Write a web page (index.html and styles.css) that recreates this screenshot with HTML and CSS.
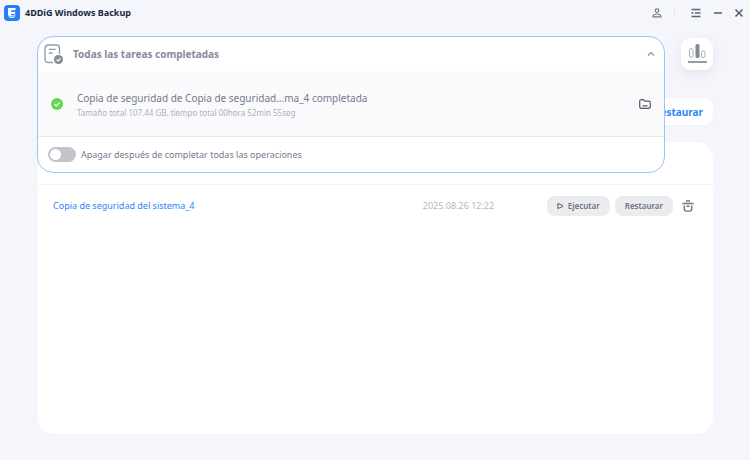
FILE: index.html
```html
<!DOCTYPE html>
<html lang="es">
<head>
  <meta charset="UTF-8">
  <meta name="viewport" content="width=device-width, initial-scale=1">
  <title>4DDiG Windows Backup</title>
  <link rel="stylesheet" href="styles.css">
</head>
<body>
  <header class="titlebar">
    <svg class="logo" width="16" height="16" viewBox="0 0 16 16">
      <rect width="16" height="16" rx="4" fill="#2a7df8"/>
      <path d="M4 3h6.500c1.600 0 1.600 2.200.5 2.200H7v1.600h3.500c1 0 1 2.200 0 2.200H7v1.200c1.700.3 3.300-.1 4.500-1.400.4 2.400-1.200 4.200-4 4.200C5.300 13 4 12 4 10z" fill="#fff"/>
      <path d="M3.500 10.500c2.500 1.800 6 1.600 8.500-1" fill="none" stroke="#2a7df8" stroke-width=".7"/>
    </svg>
    <h1 class="app-name">4DDiG Windows Backup</h1>
    <button class="win-btn user-btn" type="button" aria-label="Cuenta">
      <svg width="10" height="10" viewBox="0 0 10 10" fill="none" stroke="#747b8d" stroke-width="1.200">
        <circle cx="5" cy="2.600" r="1.800"/>
        <path d="M1 8.900c-.8-3.900 8.800-3.900 8 0z"/>
      </svg>
    </button>
    <span class="divider"></span>
    <button class="win-btn menu-btn" type="button" aria-label="Menú">
      <svg width="10" height="10" viewBox="0 0 10 10" fill="none" stroke="#5d667b" stroke-width="1.300">
        <path d="M.5 1.500h9M.5 5h2M4 5h5.500M.5 8.500h9"/>
      </svg>
    </button>
    <button class="win-btn" type="button" aria-label="Minimizar">
      <svg width="10" height="10" viewBox="0 0 10 10" stroke="#5d667b" stroke-width="1.600"><path d="M1 5h8"/></svg>
    </button>
    <button class="win-btn" type="button" aria-label="Cerrar">
      <svg width="10" height="10" viewBox="0 0 10 10" stroke="#4f586d" stroke-width="1.500"><path d="M1.500 1.500l7 7M8.500 1.500l-7 7"/></svg>
    </button>
  </header>

  <main class="content">
    <div class="toolbar">
      <button class="chart-btn" type="button" aria-label="Tareas">
        <svg width="20" height="20" viewBox="0 0 20 20" fill="none" stroke="#a5aab6" stroke-width="1">
          <rect x="2.500" y="4.500" width="3.500" height="9" rx="1.700"/>
          <rect x="14.500" y="7" width="3.500" height="6.500" rx="1.700"/>
          <rect x="8.500" y="0" width="4" height="14" rx="1.500" fill="#80879a" stroke="none"/>
          <path d="M1 18h19" stroke="#858b9c" stroke-width="1.700"/>
        </svg>
      </button>
    </div>
    <div class="tabs">
      <button class="tab" type="button">Restaurar</button>
    </div>
    <section class="card">
      <div class="card-head"></div>
      <div class="backup-row">
        <a class="backup-name" href="#">Copia de seguridad del sistema_4</a>
        <time class="backup-date">2025.08.26 12:22</time>
        <div class="row-actions">
          <button class="pill" type="button">
            <svg width="6" height="8" viewBox="0 0 6 8" fill="none" stroke="#6c7487" stroke-width="1.100" stroke-linejoin="round"><path d="M.8 1.500v5L5.200 4.700c.5-.4.5-1 0-1.400z"/></svg>
            Ejecutar
          </button>
          <button class="pill" type="button">Restaurar</button>
          <button class="trash-btn" type="button" aria-label="Eliminar">
            <svg width="12" height="12" viewBox="0 0 12 12" fill="none" stroke="#6c7487" stroke-width="1.400">
              <path d="M.5 3.500h11M4 1h4M2.200 5.500v2.700c0 2 .7 2.900 2.200 2.900h3.200c1.500 0 2.200-.9 2.200-2.900V5.500M4.500 6.200h3"/>
            </svg>
          </button>
        </div>
      </div>
    </section>
  </main>

  <section class="tasks">
    <div class="tasks-head">
      <svg width="20" height="20" viewBox="0 0 20 20" fill="none" stroke="#969cab" stroke-width="1.400">
        <path d="M9 18.500H4.500c-2.300 0-3.500-1-3.500-3.300V4.500C1 2 2 1 4.500 1h7.800C14.500 1 15.500 2 15.500 4.500V10M4.800 5.400h7M4.800 9h3.700"/>
        <circle cx="14.500" cy="15.500" r="4.500" fill="#858c9d" stroke="none"/>
        <path d="M12.600 15.500l1.500 1.400 2.400-2.600" stroke="#fff" stroke-width="1.200"/>
      </svg>
      <h2 class="tasks-title">Todas las tareas completadas</h2>
      <button class="icon-btn" type="button" aria-label="Contraer">
        <svg width="8" height="8" viewBox="0 0 8 8" fill="none" stroke="#8a90a0" stroke-width="1.200"><path d="M1 5.500l3-3 3 3"/></svg>
      </button>
    </div>
    <div class="task">
      <svg width="12" height="12" viewBox="0 0 12 12" fill="none">
        <circle cx="6" cy="6" r="6" fill="#5fdb4d"/>
        <path d="M3.400 6l2 1.900 3.300-3.500" stroke="#fff" stroke-width="1.100"/>
      </svg>
      <div class="task-info">
        <p class="task-name">Copia de seguridad de Copia de seguridad...ma_4 completada</p>
        <p class="task-detail">Tamaño total 107.44 GB, tiempo total 00hora 52min 55seg</p>
      </div>
      <button class="icon-btn" type="button" aria-label="Abrir carpeta">
        <svg width="12" height="10" viewBox="0 0 12 10" fill="none" stroke="#50596d" stroke-width="1.200">
          <path d="M.7 2.500C.7 1.200 1.200.7 2.400.7h1.800l1.500 1.500h3.700c1.300 0 1.900.6 1.900 1.800v3.300c0 1.400-.6 2-2 2H2.700c-1.400 0-2-.6-2-2zM3.500 6.800h5"/>
        </svg>
      </button>
    </div>
    <div class="shutdown">
      <input class="switch" id="shutdown" type="checkbox">
      <label for="shutdown">Apagar después de completar todas las operaciones</label>
    </div>
  </section>
</body>
</html>
```
FILE: styles.css
```css
* { box-sizing: border-box; }
body {
  display: flex;
  flex-direction: column;
  min-height: 100vh;
  margin: 0;
  background: #f5f6fc;
  color: #737b8e;
  font-family: "Noto Sans", "Open Sans", sans-serif;
  font-size: 9px;
}
h1, h2, p { margin: 0; }
button { padding: 0; border: none; background: none; color: inherit; font: inherit; cursor: pointer; }
svg { display: block; flex: none; }

/* title bar */
.titlebar { display: flex; align-items: center; height: 26px; padding: 0 1px 0 4px; }
.app-name { margin: 0 auto 0 5px; color: #1c2742; font-size: 9px; line-height: 14px; }
.win-btn { display: flex; justify-content: center; align-items: center; width: 21px; height: 20px; }
.user-btn { margin-right: 7px; }
.divider { width: 1px; height: 6px; background: #dfe1e8; }
.menu-btn { margin: 0 1px 0 10px; }

/* main area */
.content { display: flex; flex: 1; flex-direction: column; padding: 12px 37px 26px 38px; }
.toolbar, .tabs { display: flex; justify-content: flex-end; }
.chart-btn {
  display: flex;
  justify-content: center;
  align-items: center;
  width: 32px;
  height: 32px;
  border-radius: 9px;
  background: #fff;
  box-shadow: 0 4px 12px #5060901f;
}
.tabs { margin: 28px 0 17px; }
.tab { height: 27px; padding: 0 10px; border-radius: 8px; background: #fff; box-shadow: 0 0 1px #2a7df840; color: #2e83fa; font-size: 10px; font-weight: bold; }
.card { flex: 1; border-radius: 16px; background: #fff; }
.card-head { height: 43px; border-bottom: 1px solid #f1f2f4; }
.backup-row { display: flex; align-items: center; height: 41px; padding: 0 15px; }
.backup-name { flex: 1; color: #2e83fa; line-height: 14px; text-decoration: none; }
.backup-date { width: 124px; color: #b3b7c2; line-height: 14px; }
.row-actions { display: flex; align-items: center; gap: 5px; }
.pill {
  display: flex;
  justify-content: center;
  align-items: center;
  gap: 5px;
  height: 20px;
  padding: 0 10px;
  border-radius: 8px;
  background: #ebecee;
  color: #6c7487;
  font-size: 8px;
  font-weight: 600;
}
.trash-btn { display: flex; justify-content: center; width: 20px; }

/* task list that drops over the page */
.tasks {
  position: absolute;
  top: 36px;
  left: 37px;
  right: 85px;
  overflow: hidden;
  border: 1px solid #9bc4fb;
  border-radius: 16px;
  background: #fff;
}
.tasks-head { display: flex; align-items: center; gap: 9px; height: 34px; padding: 0 6px; }
.tasks-title { flex: 1; color: #858b9b; font-size: 10px; line-height: 16px; }
.icon-btn { display: flex; justify-content: center; align-items: center; width: 14px; height: 14px; }
.task { display: flex; align-items: center; gap: 14px; height: 66px; padding: 0 12px 0 13px; border-bottom: 1px solid #e8e9ed; background: #fafafc; }
.task-info { flex: 1; }
.task-name { font-size: 10px; line-height: 18px; }
.task-detail { color: #adb1bd; font-size: 8px; line-height: 12px; }
.shutdown { display: flex; align-items: center; gap: 5px; height: 35px; padding: 0 10px; }
.switch { appearance: none; display: flex; width: 28px; height: 15px; margin: 0; padding: 2px; border-radius: 8px; background: #c1c4cb; cursor: pointer; }
.switch::before { content: ""; width: 11px; height: 11px; border-radius: 50%; background: #fff; }
.switch:checked { justify-content: flex-end; background: #2e83fa; }
```
